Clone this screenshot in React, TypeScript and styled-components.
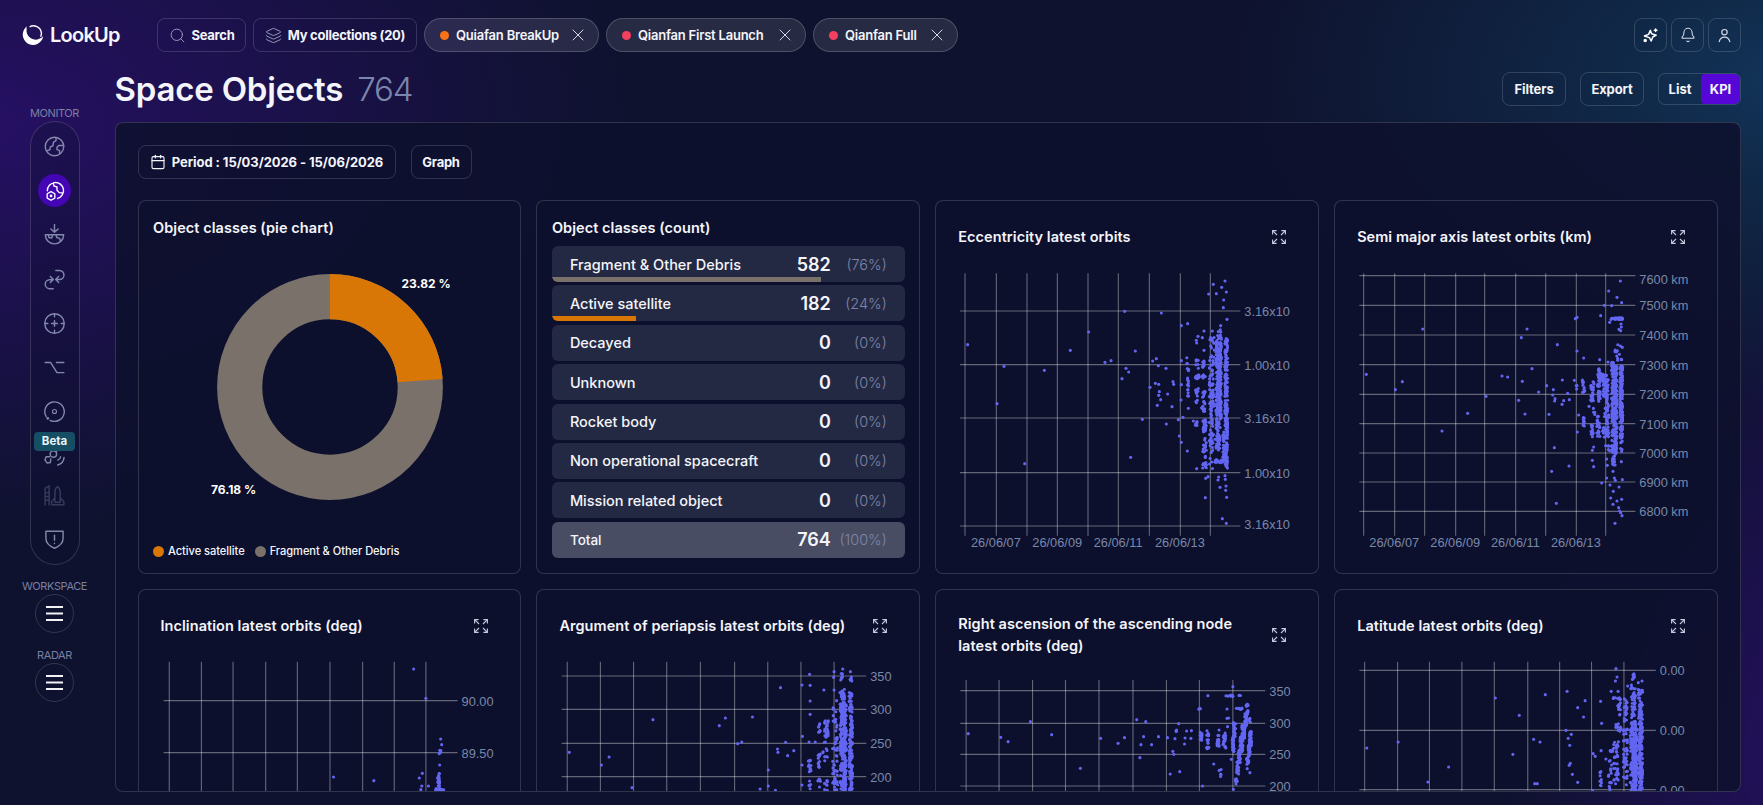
import type { ReactNode } from 'react';
import styled, { createGlobalStyle, css } from 'styled-components';
import { Bell, Calendar, Layers, Search, X } from 'lucide-react';

// ─── Global ───────────────────────────────────────────────────────────────────

const GlobalStyle = createGlobalStyle`
  *, *::before, *::after { box-sizing: border-box; }
  body {
    margin: 0;
    overflow: hidden;
    font-family: Inter, 'Liberation Sans', sans-serif;
    color: #f4f5fa;
    background: #0e122e;
  }
  button { font-family: inherit; color: inherit; cursor: pointer; }
`;

const border = 'rgba(255, 255, 255, 0.15)';

// ─── Styled components ────────────────────────────────────────────────────────

const Page = styled.div`
  width: 100%;
  height: 805px;
  display: flex;
  flex-direction: column;
  overflow: hidden;
  background:
    radial-gradient(ellipse 660px 410px at -20px 125px, #261064 0%, rgba(35, 16, 92, 0.78) 32%, rgba(14, 18, 46, 0) 100%),
    radial-gradient(ellipse 560px 330px at 1790px 80px, #12345a 0%, rgba(17, 48, 80, 0.75) 30%, rgba(14, 18, 46, 0) 100%),
    radial-gradient(ellipse 320px 500px at 1820px 760px, #260f62 0%, rgba(34, 16, 88, 0.8) 30%, rgba(14, 18, 46, 0) 100%),
    #0e122e;
`;

const TopBar = styled.header`
  flex: none;
  height: 52px;
  padding: 18px 22px 0;
  display: flex;
  align-items: center;
`;

const Logo = styled.div`
  width: 135px;
  display: flex;
  align-items: center;
  gap: 5px;
  font-size: 20px;
  font-weight: 600;
  letter-spacing: -0.75px;
`;

const TopLeft = styled.div`
  flex: 1;
  display: flex;
  gap: 7px;
`;

const TopRight = styled.div`
  display: flex;
  gap: 4px;
`;

const OutlineButton = styled.button<{ $w: number; $tracking?: number }>`
  width: ${({ $w }) => $w}px;
  height: 34px;
  padding: 0;
  display: flex;
  align-items: center;
  justify-content: center;
  gap: 6px;
  border: 1px solid ${border};
  border-radius: 8px;
  background: transparent;
  font-size: 13px;
  font-weight: 700;
  letter-spacing: ${({ $tracking = -0.28 }) => $tracking}px;
  white-space: nowrap;
`;

const Chip = styled.div<{ $w: number }>`
  width: ${({ $w }) => $w}px;
  height: 34px;
  padding: 0 10px 0 15px;
  display: flex;
  align-items: center;
  gap: 7px;
  border: 1px solid rgba(255, 255, 255, 0.18);
  border-radius: 17px;
  background: rgba(255, 255, 255, 0.1);
  font-size: 13px;
  font-weight: 600;
  letter-spacing: -0.22px;
  white-space: nowrap;

  svg { margin-left: auto; }
`;

const Dot = styled.span<{ $color: string; $size: number }>`
  flex: none;
  width: ${({ $size }) => $size}px;
  height: ${({ $size }) => $size}px;
  border-radius: 50%;
  background: ${({ $color }) => $color};
`;

const Body = styled.div`
  flex: 1;
  min-height: 0;
  display: flex;
`;

const Sidebar = styled.nav`
  flex: none;
  width: 109px;
  padding-top: 54px;
  display: flex;
  flex-direction: column;
  align-items: center;
`;

const SideLabel = styled.div`
  height: 15px;
  line-height: 15px;
  font-size: 11px;
  letter-spacing: -0.4px;
  color: #7980a3;
`;

const SidePill = styled.div`
  width: 50px;
  height: 444px;
  padding: 8px 0;
  margin-bottom: 14px;
  display: flex;
  flex-direction: column;
  align-items: center;
  border: 1px solid ${border};
  border-radius: 25px;
  background: rgba(14, 18, 46, 0.3);
`;

const SideItem = styled.div<{ $active?: boolean; $dim?: boolean; $tight?: boolean }>`
  position: relative;
  flex: none;
  width: 33px;
  height: 33px;
  margin-bottom: ${({ $tight }) => ($tight ? 6.2 : 11.2)}px;
  display: grid;
  place-items: center;
  border-radius: 50%;
  color: #8188ab;
  opacity: ${({ $dim }) => ($dim ? 0.35 : 1)};
  ${({ $active }) => $active && css`
    color: #fff;
    background: #4406b4;
  `}
`;

const BetaBadge = styled.span`
  position: absolute;
  top: -7px;
  left: -4px;
  width: 41px;
  height: 19px;
  line-height: 19px;
  border-radius: 4px;
  text-align: center;
  font-size: 11.5px;
  font-weight: 700;
  color: #e8f4f8;
  background: #164e63;
`;

const RoundButton = styled.button`
  width: 39px;
  height: 39px;
  margin-bottom: 15px;
  padding: 0;
  display: grid;
  place-items: center;
  border: 1px solid ${border};
  border-radius: 50%;
  background: transparent;
`;

const Main = styled.main`
  flex: 1;
  min-width: 0;
  margin-left: 5.5px;
  padding-right: 22px;
  display: flex;
  flex-direction: column;
`;

const TitleRow = styled.div`
  flex: none;
  height: 70px;
  padding-top: 20px;
  display: flex;
  align-items: flex-start;
`;

const Title = styled.h1`
  flex: 1;
  margin: -3px 0 0;
  line-height: 40px;
  font-size: 33px;
  font-weight: 600;
  letter-spacing: -0.2px;

  span {
    margin-left: 14px;
    font-weight: 300;
    letter-spacing: -1.1px;
    color: #7c86ad;
  }
`;

const Actions = styled.div`
  display: flex;
  align-items: center;
  gap: 14px;
`;

const Toggle = styled.div`
  width: 83px;
  height: 32px;
  display: flex;
  overflow: hidden;
  border: 1px solid ${border};
  border-radius: 7px;
`;

const ToggleOption = styled.button<{ $on?: boolean }>`
  width: ${({ $on }) => ($on ? 39 : 42)}px;
  padding: 0;
  border: 0;
  border-radius: ${({ $on }) => ($on ? '4px' : 0)};
  background: ${({ $on }) => ($on ? '#5706d8' : 'transparent')};
  font-size: 13px;
  font-weight: 700;
`;

const Panel = styled.section`
  height: 670px;
  padding: 22px 22px 0;
  overflow: hidden;
  border: 1px solid ${border};
  border-radius: 8px;
  background: rgba(13, 17, 45, 0.85);
`;

const PanelTools = styled.div`
  display: flex;
  gap: 15px;
  margin-bottom: 21px;
`;

const CardGrid = styled.div`
  display: grid;
  grid-template-columns: repeat(4, 1fr);
  grid-auto-rows: 374px;
  gap: 15px;
`;

const Card = styled.article<{ $chart?: boolean }>`
  min-width: 0;
  padding: ${({ $chart }) => ($chart ? '23px 22px 0' : '15.5px 14.5px 13px')};
  display: flex;
  flex-direction: column;
  border: 1px solid ${border};
  border-radius: 8px;
  background: rgba(13, 17, 45, 0.6);
`;

const CardTitle = styled.h2`
  margin: 0;
  line-height: 22px;
  font-size: 14.5px;
  font-weight: 600;
  letter-spacing: 0.06px;
`;

const CardHeader = styled.div`
  min-height: 26px;
  padding-right: 10px;
  margin-bottom: 21px;
  display: flex;
  align-items: center;
  justify-content: space-between;
  gap: 15px;

  svg { flex: none; }
`;

const PieBox = styled.div`
  flex: 1;
`;

const Legend = styled.div`
  height: 18px;
  display: flex;
  align-items: center;
  gap: 10px;
  font-size: 11.1px;
  font-weight: 500;
  letter-spacing: -0.05px;
`;

const LegendItem = styled.span`
  display: flex;
  align-items: center;
  gap: 4px;
`;

const CountList = styled.div`
  margin-top: 7.5px;
  display: flex;
  flex-direction: column;
  gap: 3.4px;
`;

const CountRow = styled.div<{ $total?: boolean }>`
  position: relative;
  height: 36px;
  padding: 0 18px;
  display: grid;
  grid-template-columns: 1fr auto 56px;
  align-items: center;
  overflow: hidden;
  border-radius: 6px;
  background: ${({ $total }) => ($total ? '#494d63' : '#242943')};
`;

const CountLabel = styled.span<{ $small?: boolean }>`
  font-size: ${({ $small }) => ($small ? 13.5 : 14.5)}px;
  font-weight: 500;
`;

const CountValue = styled.span`
  font-size: 18px;
  font-weight: 600;
`;

const CountPercent = styled.span`
  text-align: right;
  font-size: 14.5px;
  font-weight: 300;
  color: #7d86a8;
`;

const CountBar = styled.i`
  position: absolute;
  left: 0;
  bottom: 0;
  height: 5px;
`;

// ─── Icons ────────────────────────────────────────────────────────────────────

function Glyph({ children, size = 22 }: { children: ReactNode; size?: number }) {
  return (
    <svg width={size} height={size} viewBox="0 0 22 22" fill="none" stroke="currentColor" strokeWidth={1.5} strokeLinecap="round" strokeLinejoin="round">
      {children}
    </svg>
  );
}

const sideIcons: { icon: ReactNode; active?: boolean; dim?: boolean; beta?: boolean }[] = [
  {
    icon: (
      <>
        <circle cx="11" cy="11" r="9.7" />
        <path d="M12.6 1.6V4.8L10 6.4 9.4 10.2 6.6 11.4 6.2 14.4 2.6 15.6M20.6 10H15.4L13.6 11.8V14.2L16.4 15.4V18.6" />
      </>
    ),
  },
  {
    active: true,
    icon: (
      <>
        <path d="M2.6 10.8A8.9 8.9 0 1 1 13.8 19.2M9.2 2.2 9.6 5.4 13.2 6.6V10.2L15.6 12.8 19.4 13.2" />
        <path d="m6.6 11.6 4.2 2.4v4.8l-4.2 2.4-4.2-2.4v-4.8z" />
        <circle cx="6.6" cy="16.4" r=".8" fill="currentColor" />
      </>
    ),
  },
  {
    icon: (
      <path d="M11 .6V8M7.2 5.2 11 8.6l3.8-3.4M1.4 11.2h19.2a9.6 9.6 0 0 1-19.2 0zM4.6 11.4l.6 2.8 3 .4.8-3M12.6 11.6l.8 2.6 3 .8.8 3" />
    ),
  },
  {
    icon: <path d="M12.4 1.6h3.8a4.4 4.4 0 0 1 0 9.4h-4M15.4 7.8 12.2 11l3.2 3.2M9.6 20.6H6a4.5 4.5 0 0 1 0-9.4h3.6M6.6 7.8 9.8 11l-3.2 3.2" />,
  },
  {
    icon: (
      <>
        <circle cx="11" cy="11" r="10.2" />
        <path d="M11 1v3M11 18v3M1 11h3M18 11h3M8 11h6M11 8v6" />
      </>
    ),
  },
  { icon: <path d="M1.2 5.8H7L13.6 16.4H20.8M13 5.8h7.8" /> },
  {
    icon: (
      <>
        <path d="M2.2 16.2A10.2 10.2 0 1 1 6.4 20.2" />
        <circle cx="11" cy="11" r="2.1" strokeWidth="1.2" />
        <circle cx="3.9" cy="18.2" r=".8" fill="currentColor" />
      </>
    ),
  },
  {
    beta: true,
    icon: (
      <>
        <circle cx="9.8" cy="9.4" r="3.4" />
        <path d="M13 6.6 17 3M5.8 12.4 2.2 12.2 1 15.6 3.4 19 6.6 18.4 7.2 14.6M14.4 15.8a5 5 0 0 0 3-3.4M14.4 21a9 9 0 0 0 6.6-8" />
      </>
    ),
  },
  {
    dim: true,
    icon: <path d="M1.2 21V3.6L5.4.8V21M1.2 8h4.2M1.2 12h4.2M1.2 16h4.2M11.4 18V7.6c0-2.6 1.2-4.8 2.8-6 1.6 1.2 2.8 3.4 2.8 6V18zM11.4 13.4 8 17.6v3h3.4M17 13.4l3.8 4.2v3H17M11.4 20.6H17" />,
  },
  {
    icon: (
      <>
        <path d="M2 2.4h18v7.4c0 4.8-4 8.4-9 10.4-5-2-9-5.6-9-10.4z" />
        <path d="M11 6.4v5.4M11 14.8v.5" />
      </>
    ),
  },
];

function LogoMark() {
  return (
    <svg width="23" height="22" viewBox="0 0 23 22" fill="none">
      <path d="M5 2.3A10.3 10.3 0 1 0 21.2 12.2 9.6 9.6 0 0 1 5 2.3Z" fill="#fff" />
      <path d="M4.2 4.6c-1 3.6.2 8 3.6 10.4" stroke="#fff" strokeWidth="1" />
      <path d="M7.6 2.8C12 .2 18.8 3 19.4 9c.1 1.6-.2 2.6-.8 3.8" stroke="#fff" strokeWidth="1.4" />
    </svg>
  );
}

function SparkIcon() {
  return (
    <svg width="15" height="15" viewBox="0 0 15 15" fill="none" stroke="#fff" strokeWidth="1.5" strokeLinejoin="round" strokeLinecap="round">
      <path d="m7.4 2.4 1.2 3.4 4.6 1.4-3.4 1.8-1.6 4-1.8-3.4-5-1.6 4.2-1.6z" />
      <path d="M12.6 1v2.6M11.3 2.3h2.6" />
      <circle cx="2.2" cy="12.6" r="1" fill="#fff" />
    </svg>
  );
}

function UserIcon() {
  return (
    <svg width="13" height="15" viewBox="0 0 13 15" fill="none" stroke="#d5d9e6" strokeWidth="1.2" strokeLinecap="round">
      <circle cx="6.5" cy="4.2" r="2.7" />
      <path d="M1.2 13.6c.8-3 3-4.4 5.3-4.4s4.5 1.4 5.3 4.4" />
    </svg>
  );
}

function ExpandIcon() {
  return (
    <svg width="14" height="14" viewBox="0 0 14 14" fill="none" stroke="#c6cadb" strokeWidth="1.1">
      <path d="M.6 4.6V.6h4M.8.8l4.2 4.2M9.4.6h4v4M13.2.8 9 5M.6 9.4v4h4M.8 13.2 5 9M13.4 9.4v4h-4M13.2 13.2 9 9" />
    </svg>
  );
}

function MenuBars() {
  return (
    <svg width="17" height="17" viewBox="0 0 17 17" fill="#f1f2f6">
      <rect y="1" width="17" height="2" />
      <rect y="7.5" width="17" height="2" />
      <rect y="14" width="17" height="2" />
    </svg>
  );
}

// ─── Scatter charts ───────────────────────────────────────────────────────────

type Point = [number, number];
// x, x spread, y from, y to, number of samples
type Band = [number, number, number, number, number];

interface Plot {
  title: string;
  sx: number;
  ox: number;
  oy: number;
  cols: number[];
  rows: { y: number; label: string; ly?: number }[];
  span: [number, number];
  range: [number, number];
  dates?: number[];
  points: Point[];
  bands: Band[];
}

const dateLabels = ['26/06/07', '26/06/09', '26/06/11', '26/06/13'];

const plots: Plot[] = [
  {
    title: 'Eccentricity latest orbits',
    sx: 3, ox: 28, oy: 76,
    cols: [105, 199, 291, 382, 474, 565, 658, 751, 841],
    rows: [
      { y: 348, label: '3.16x10' },
      { y: 509, label: '1.00x10' },
      { y: 669, label: '3.16x10' },
      { y: 833, label: '1.00x10' },
      { y: 993, label: '3.16x10', ly: 989 },
    ],
    span: [90, 931],
    range: [235, 1022],
    dates: [123, 307, 491, 675],
    points: [
      [113, 449], [222, 514], [201, 626], [284, 806], [343, 526], [421, 466], [476, 411], [525, 502], [543, 497],
      [584, 349], [694, 354], [616, 468], [588, 520], [596, 531], [576, 551], [602, 787], [637, 673], [668, 498],
      [679, 491], [685, 512], [708, 520], [660, 577], [676, 565], [686, 568], [688, 590], [686, 601], [692, 614],
      [682, 631], [713, 597], [729, 560], [731, 568], [726, 635], [709, 687], [754, 392], [773, 386], [754, 497],
      [754, 569], [753, 615], [745, 674], [759, 667], [748, 723], [754, 742], [772, 768], [836, 297], [850, 268],
      [859, 296], [875, 277], [885, 258], [889, 291], [881, 315], [880, 338], [891, 373], [872, 392], [847, 408],
      [822, 408], [804, 424], [817, 428], [799, 436], [800, 444], [822, 466], [775, 640], [790, 678], [800, 821],
      [827, 850], [834, 845], [826, 908], [866, 846], [864, 855], [870, 877], [885, 842], [886, 853], [888, 873],
      [887, 886], [890, 907], [877, 971], [889, 985],
    ],
    bands: [
      [868, 7, 402, 440, 14], [866, 8, 440, 668, 230], [864, 7, 668, 770, 38], [889, 4, 430, 820, 190],
      [846, 8, 425, 480, 9], [845, 7, 480, 650, 60], [843, 5, 650, 825, 30], [822, 5, 488, 520, 8],
      [820, 6, 540, 550, 8], [820, 6, 575, 650, 18], [824, 5, 673, 712, 22], [824, 6, 730, 822, 24],
      [801, 4, 480, 520, 7], [802, 6, 540, 552, 10], [801, 4, 575, 625, 12], [799, 3, 675, 692, 6],
      [773, 3, 488, 530, 8], [774, 2, 548, 604, 11], [870, 16, 794, 804, 20], [884, 6, 710, 810, 40],
      [855, 12, 700, 760, 14],
    ],
  },
  {
    title: 'Semi major axis latest orbits (km)',
    sx: 3, ox: 32, oy: 76,
    cols: [116, 209, 299, 392, 479, 572, 662, 754, 842],
    rows: [
      { y: 242, label: '7600 km', ly: 254 },
      { y: 331, label: '7500 km' },
      { y: 420, label: '7400 km' },
      { y: 509, label: '7300 km' },
      { y: 598, label: '7200 km' },
      { y: 686, label: '7100 km' },
      { y: 774, label: '7000 km' },
      { y: 861, label: '6900 km' },
      { y: 949, label: '6800 km' },
    ],
    span: [103, 931],
    range: [235, 1022],
    dates: [133, 316, 498, 678],
    points: [
      [124, 538], [211, 584], [232, 560], [293, 402], [351, 708], [428, 655], [483, 604], [531, 543], [548, 546],
      [581, 616], [589, 428], [606, 402], [592, 559], [621, 521], [641, 591], [600, 657], [665, 572], [672, 658],
      [685, 584], [683, 600], [690, 611], [689, 618], [712, 555], [716, 617], [711, 628], [728, 595], [733, 614],
      [688, 758], [680, 829], [694, 925], [732, 813], [697, 449], [756, 468], [776, 489], [751, 371], [756, 367],
      [748, 556], [761, 660], [757, 711], [851, 288], [886, 258], [876, 307], [890, 323], [838, 331], [860, 332],
      [827, 362], [854, 382], [888, 387], [882, 403], [887, 407], [889, 396], [824, 494], [849, 501], [792, 634],
      [802, 796], [806, 815], [806, 756], [802, 766], [845, 792], [847, 811], [889, 800], [864, 829], [845, 849],
      [830, 864], [868, 849], [871, 856], [892, 854], [855, 870], [882, 876], [865, 889], [857, 909], [876, 918],
      [890, 913], [864, 928], [881, 938], [884, 948], [887, 953], [891, 962], [870, 985], [842, 752],
    ],
    bands: [
      [876, 18, 368, 374, 40], [884, 8, 445, 500, 9], [873, 3, 465, 485, 5], [868, 8, 512, 620, 120],
      [868, 8, 620, 780, 150], [866, 5, 780, 810, 12], [889, 4, 512, 735, 170], [890, 3, 735, 770, 6],
      [864, 4, 498, 515, 5], [822, 4, 520, 620, 30], [828, 8, 535, 560, 26], [842, 8, 540, 610, 44],
      [845, 7, 615, 730, 38], [840, 8, 690, 720, 8], [802, 5, 560, 620, 24], [812, 8, 640, 668, 8],
      [820, 5, 675, 725, 16], [802, 4, 685, 728, 12], [776, 4, 550, 600, 13], [776, 2, 665, 694, 9],
      [755, 2, 570, 584, 4], [857, 10, 740, 790, 8],
    ],
  },
  {
    title: 'Inclination latest orbits (deg)',
    sx: 1.96, ox: 30, oy: 80,
    cols: [75, 138, 200, 264, 326, 390, 454, 516, 578],
    rows: [{ y: 362, label: '90.00' }, { y: 518, label: '89.50' }],
    span: [64, 640],
    range: [245, 900],
    points: [[554, 267], [578, 355], [397, 591], [476, 602], [607, 477], [609, 494], [605, 555], [571, 580], [565, 594], [570, 618], [568, 629], [583, 618]],
    bands: [[606, 2, 508, 522, 7], [603, 2, 578, 634, 26], [605, 8, 626, 640, 24], [569, 4, 628, 660, 6]],
  },
  {
    title: 'Argument of periapsis latest orbits (deg)',
    sx: 1.96, ox: 429, oy: 80,
    cols: [857, 922, 987, 1052, 1118, 1185, 1250, 1315, 1380],
    rows: [{ y: 288, label: '350' }, { y: 388, label: '300' }, { y: 490, label: '250' }, { y: 590, label: '200' }],
    span: [846, 1443],
    range: [245, 900],
    points: [
      [861, 517], [924, 555], [939, 531], [984, 623], [1025, 419], [1155, 437], [1167, 414], [1191, 491], [1199, 486],
      [1220, 411], [1275, 323], [1285, 487], [1269, 507], [1270, 517], [1289, 527], [1301, 512], [1251, 570],
      [1251, 618], [1235, 627], [1265, 631], [1317, 315], [1332, 283], [1333, 316], [1333, 363], [1333, 403],
      [1360, 330], [1318, 469], [1317, 555], [1317, 615], [1331, 486], [1343, 486], [1380, 275], [1379, 292],
      [1380, 330], [1385, 362], [1397, 267], [1412, 275], [1412, 300],
    ],
    bands: [
      [1395, 2, 275, 302, 8], [1413, 2, 290, 306, 4], [1396, 5, 325, 372, 24], [1412, 3, 335, 368, 12],
      [1398, 6, 372, 455, 80], [1413, 3, 372, 460, 40], [1398, 6, 455, 636, 170], [1413, 3, 460, 640, 100],
      [1382, 4, 380, 455, 12], [1382, 5, 470, 636, 28], [1365, 4, 420, 475, 22], [1351, 2, 428, 462, 8],
      [1351, 2, 515, 562, 12], [1363, 5, 485, 548, 10], [1332, 3, 500, 580, 12], [1351, 3, 596, 632, 6],
      [1364, 3, 596, 632, 8], [1332, 2, 602, 630, 5], [1383, 4, 578, 632, 10],
    ],
  },
  {
    title: 'Right ascension of the ascending node latest orbits (deg)',
    sx: 1.882, ox: 28, oy: 98,
    cols: [68, 130, 193, 255, 318, 382, 445, 507, 570],
    rows: [{ y: 332, label: '350' }, { y: 430, label: '300' }, { y: 523, label: '250' }, { y: 618, label: '200' }],
    span: [57, 631],
    range: [300, 900],
    points: [
      [72, 461], [133, 472], [147, 485], [189, 425], [229, 464], [283, 565], [321, 475], [354, 490], [366, 473],
      [389, 419], [406, 425], [402, 470], [397, 494], [417, 494], [430, 470], [395, 533], [447, 473], [457, 514],
      [459, 523], [452, 582], [470, 575], [468, 431], [483, 453], [480, 474], [479, 492], [492, 452], [491, 475],
      [461, 476], [523, 347], [570, 320], [559, 387], [544, 450], [534, 552], [513, 618], [571, 628],
      [559, 415], [562, 414], [560, 440], [567, 538], [602, 578], [597, 566],
    ],
    bands: [
      [508, 2, 384, 388, 3], [563, 8, 345, 349, 12], [583, 2, 345, 349, 3], [582, 6, 384, 388, 9],
      [464, 2, 448, 460, 4], [510, 2, 455, 484, 14], [523, 2, 452, 508, 20], [542, 2, 465, 500, 14],
      [554, 3, 458, 504, 22], [546, 2, 568, 592, 5], [573, 2, 428, 470, 24], [570, 2, 470, 515, 26],
      [597, 2, 372, 405, 12], [594, 2, 400, 440, 26], [590, 3, 435, 475, 46], [586, 3, 470, 515, 46],
      [582, 2, 510, 550, 30], [579, 2, 545, 582, 18], [576, 2, 595, 612, 7], [603, 2, 455, 500, 40],
      [601, 2, 495, 530, 28], [598, 2, 525, 555, 14], [602, 2, 405, 430, 6],
    ],
  },
  {
    title: 'Latitude latest orbits (deg)',
    sx: 1.882, ox: 427, oy: 80,
    cols: [818, 880, 940, 1001, 1062, 1125, 1185, 1245, 1306],
    rows: [{ y: 271, label: '0.00' }, { y: 451, label: '0.00' }, { y: 629, label: '0.00' }],
    span: [808, 1366],
    range: [245, 900],
    points: [
      [822, 504], [881, 486], [937, 606], [976, 561], [1064, 354], [1158, 344], [1109, 406], [1097, 523], [1136, 478],
      [1148, 486], [1138, 611], [1143, 611], [1199, 334], [1233, 362], [1219, 383], [1230, 411], [1197, 451],
      [1207, 463], [1201, 475], [1204, 496], [1205, 550], [1203, 556], [1209, 583], [1219, 607], [1262, 364],
      [1264, 430], [1248, 521], [1252, 529], [1263, 512], [1272, 537], [1247, 631], [1291, 266], [1293, 291],
      [1290, 303], [1282, 334], [1295, 334], [1313, 318], [1320, 315], [1333, 308], [1340, 303], [1319, 326],
    ],
    bands: [
      [1324, 2, 280, 300, 10], [1292, 8, 350, 360, 8], [1297, 3, 366, 408, 14], [1309, 3, 350, 430, 16],
      [1324, 4, 322, 440, 44], [1337, 4, 328, 440, 44], [1324, 6, 440, 640, 170], [1338, 3, 440, 640, 110],
      [1296, 5, 420, 460, 12], [1309, 4, 445, 620, 40], [1282, 4, 508, 515, 5], [1291, 5, 480, 620, 34],
      [1263, 2, 565, 618, 9], [1280, 3, 540, 634, 14], [1330, 8, 470, 600, 60],
    ],
  },
];

function scatter(bands: Band[]): Point[] {
  let seed = 7;
  const next = () => {
    seed = (seed * 16807) % 2147483647;
    return seed / 2147483647;
  };
  return bands.flatMap(([x, spread, from, to, count]) =>
    Array.from({ length: count }, (): Point => [x + (next() * 2 - 1) * spread, from + next() * (to - from)])
  );
}

const AxisText = styled.text`
  font-family: 'Liberation Sans', sans-serif;
  font-size: 12.8px;
  fill: #7888a9;
`;

function ScatterPlot({ plot }: { plot: Plot }) {
  const px = (x: number) => x / plot.sx - plot.ox;
  const py = (y: number) => y / 3 - plot.oy;
  const [left, right] = plot.span;
  const [top, bottom] = plot.range;

  return (
    <svg width="338" height="285">
      <g stroke="#fff" strokeOpacity="0.36" strokeWidth="1.1">
        {plot.rows.map(({ y }) => <line key={y} x1={px(left)} x2={px(right)} y1={py(y)} y2={py(y)} />)}
        {plot.cols.map((x) => <line key={x} x1={px(x)} x2={px(x)} y1={py(top)} y2={py(bottom)} />)}
      </g>
      <g fill="#6366f1">
        {[...plot.points, ...scatter(plot.bands)].map(([x, y], i) => (
          <circle key={i} cx={px(x)} cy={py(y)} r="1.55" />
        ))}
      </g>
      {plot.rows.map(({ y, label, ly = y + 1 }) => (
        <AxisText key={y} x={px(right) + 4} y={py(ly) + 4.8}>{label}</AxisText>
      ))}
      {plot.dates?.map((x, i) => <AxisText key={x} x={px(x)} y={py(1056)}>{dateLabels[i]}</AxisText>)}
    </svg>
  );
}

// ─── Cards ────────────────────────────────────────────────────────────────────

const PieText = styled.text`
  font-size: 12px;
  font-weight: 700;
  fill: #fff;
`;

function PieCard() {
  const r = 90.3;
  const length = 2 * Math.PI * r;
  const active = length * 0.2382;

  return (
    <Card>
      <CardTitle>Object classes (pie chart)</CardTitle>
      <PieBox>
        <svg width="352" height="290">
          <g fill="none" strokeWidth="45.2" transform="rotate(-90 177 148)">
            <circle cx="177" cy="148" r={r} stroke="#7a716b" />
            <circle cx="177" cy="148" r={r} stroke="#d97706" strokeDasharray={`${active} ${length}`} />
          </g>
          <PieText x="248.5" y="48.5">23.82 %</PieText>
          <PieText x="58" y="254.5">76.18 %</PieText>
        </svg>
      </PieBox>
      <Legend>
        <LegendItem><Dot $color="#d97706" $size={11} />Active satellite</LegendItem>
        <LegendItem><Dot $color="#7a716b" $size={11} />Fragment &amp; Other Debris</LegendItem>
      </Legend>
    </Card>
  );
}

const counts = [
  { label: 'Fragment & Other Debris', value: 582, percent: 76.18, color: '#7a716b' },
  { label: 'Active satellite', value: 182, percent: 23.82, color: '#d97706' },
  { label: 'Decayed', value: 0, percent: 0 },
  { label: 'Unknown', value: 0, percent: 0 },
  { label: 'Rocket body', value: 0, percent: 0 },
  { label: 'Non operational spacecraft', value: 0, percent: 0 },
  { label: 'Mission related object', value: 0, percent: 0 },
];

function CountCard() {
  return (
    <Card>
      <CardTitle>Object classes (count)</CardTitle>
      <CountList>
        {counts.map(({ label, value, percent, color }) => (
          <CountRow key={label}>
            <CountLabel>{label}</CountLabel>
            <CountValue>{value}</CountValue>
            <CountPercent>({Math.round(percent)}%)</CountPercent>
            {color && <CountBar style={{ width: `${percent}%`, background: color }} />}
          </CountRow>
        ))}
        <CountRow $total>
          <CountLabel $small>Total</CountLabel>
          <CountValue>764</CountValue>
          <CountPercent>(100%)</CountPercent>
        </CountRow>
      </CountList>
    </Card>
  );
}

function ScatterCard({ plot }: { plot: Plot }) {
  return (
    <Card $chart>
      <CardHeader>
        <CardTitle>{plot.title}</CardTitle>
        <ExpandIcon />
      </CardHeader>
      <ScatterPlot plot={plot} />
    </Card>
  );
}

// ─── Page ─────────────────────────────────────────────────────────────────────

const chips = [
  { name: 'Quiafan BreakUp', color: '#f97316', width: 175 },
  { name: 'Qianfan First Launch', color: '#f43f5e', width: 200 },
  { name: 'Qianfan Full', color: '#f43f5e', width: 145 },
];

export default function App() {
  return (
    <Page>
      <GlobalStyle />
      <TopBar>
        <Logo><LogoMark />LookUp</Logo>
        <TopLeft>
          <OutlineButton $w={89}><Search size={17} strokeWidth={1.3} color="#9ba2bd" />Search</OutlineButton>
          <OutlineButton $w={164}><Layers size={17} strokeWidth={1.3} color="#9ba2bd" />My collections (20)</OutlineButton>
          {chips.map(({ name, color, width }) => (
            <Chip key={name} $w={width}>
              <Dot $color={color} $size={9} />
              {name}
              <X size={20} strokeWidth={1.2} color="#d5d8e4" />
            </Chip>
          ))}
        </TopLeft>
        <TopRight>
          <OutlineButton $w={33}><SparkIcon /></OutlineButton>
          <OutlineButton $w={33}><Bell size={16} strokeWidth={1.6} color="#d5d9e6" /></OutlineButton>
          <OutlineButton $w={33}><UserIcon /></OutlineButton>
        </TopRight>
      </TopBar>

      <Body>
        <Sidebar>
          <SideLabel>MONITOR</SideLabel>
          <SidePill>
            {sideIcons.map(({ icon, active, dim, beta }, i) => (
              <SideItem key={i} $active={active} $dim={dim} $tight={beta}>
                <Glyph size={active ? 20 : 21}>{icon}</Glyph>
                {beta && <BetaBadge>Beta</BetaBadge>}
              </SideItem>
            ))}
          </SidePill>
          <SideLabel>WORKSPACE</SideLabel>
          <RoundButton><MenuBars /></RoundButton>
          <SideLabel>RADAR</SideLabel>
          <RoundButton><MenuBars /></RoundButton>
        </Sidebar>

        <Main>
          <TitleRow>
            <Title>Space Objects<span>764</span></Title>
            <Actions>
              <OutlineButton $w={64} $tracking={-0.1}>Filters</OutlineButton>
              <OutlineButton $w={64} $tracking={-0.15}>Export</OutlineButton>
              <Toggle>
                <ToggleOption>List</ToggleOption>
                <ToggleOption $on>KPI</ToggleOption>
              </Toggle>
            </Actions>
          </TitleRow>
          <Panel>
            <PanelTools>
              <OutlineButton $w={258} $tracking={-0.06}><Calendar size={16} strokeWidth={1.7} />Period : 15/03/2026 - 15/06/2026</OutlineButton>
              <OutlineButton $w={61}>Graph</OutlineButton>
            </PanelTools>
            <CardGrid>
              <PieCard />
              <CountCard />
              {plots.map((plot) => <ScatterCard key={plot.title} plot={plot} />)}
            </CardGrid>
          </Panel>
        </Main>
      </Body>
    </Page>
  );
}
